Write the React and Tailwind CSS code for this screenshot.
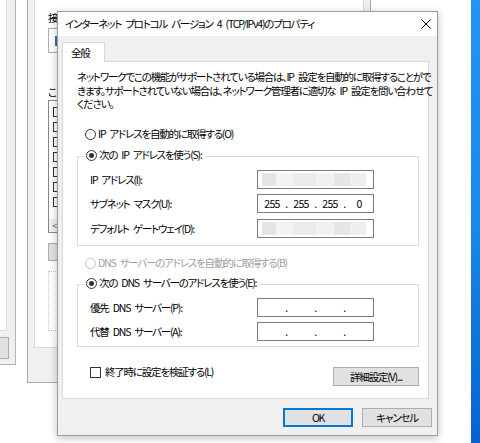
export default function App() {
  const Radio = ({ checked, disabled }) => (
    <span
      className={`flex h-[11px] w-[11px] shrink-0 items-center justify-center rounded-full border bg-white ${
        disabled ? "border-[#c4c4c4]" : "border-[#333333]"
      }`}
    >
      {checked && <span className="h-[5px] w-[5px] rounded-full bg-[#333333]" />}
    </span>
  );

  const Censor = () => (
    <div className="flex h-full items-center pl-[4px]">
      <div className="h-[13px] w-[14px] bg-[#e4e4e4]" />
      <div className="h-[13px] w-[18px] bg-[#f3f3f3]" />
      <div className="h-[13px] w-[22px] bg-[#ebebeb]" />
      <div className="h-[13px] w-[18px] bg-[#f1f1f1]" />
      <div className="h-[13px] w-[16px] bg-[#e6e6e6]" />
      <div className="h-[13px] w-[16px] bg-[#efefef]" />
    </div>
  );

  const IpField = ({ values }) => (
    <div className="flex h-[19px] w-[117px] items-center border border-[#7a7a7a] bg-white pl-[2px] tracking-[-0.6px]">
      {[0, 1, 2, 3].map((i) => (
        <div key={i} className="flex items-center">
          <span className="w-[24px] text-center">{values ? values[i] : ""}</span>
          {i < 3 && <span className="w-[5px] text-center">.</span>}
        </div>
      ))}
    </div>
  );

  const CensorField = () => (
    <div className="h-[19px] w-[117px] border border-[#7a7a7a] bg-white">
      <Censor />
    </div>
  );

  return (
    <div className="relative h-[443px] w-[480px] overflow-hidden whitespace-nowrap bg-white font-['Noto_Sans_CJK_JP',sans-serif] text-[10.5px] leading-[14px] tracking-[-1.2px] text-black [font-feature-settings:'palt'] [word-spacing:3px]">
      {/* desktop strip */}
      <div className="absolute right-0 top-0 h-full w-[9px] bg-gradient-to-b from-[#2494f2] via-[#1b87ec] to-[#0862cf]" />

      {/* far-left window */}
      <div className="absolute left-[-30px] top-[-20px] h-[385px] w-[46px] border border-[#b4b4b4] bg-[#f0f0f0]">
        <div className="ml-[8px] mt-[8px] h-[342px] w-[28px] border border-[#d9d9d9] bg-white" />
        <div className="ml-[20px] mt-[6px] h-[22px] w-[18px] border border-[#adadad] bg-[#e1e1e1]" />
      </div>

      {/* back window: Ethernet properties (mostly covered) */}
      <div className="absolute left-[27px] top-[-40px] h-[423px] w-[344px] border border-[#aaaaaa] bg-[#f0f0f0] px-[6px]">
        <div className="mt-[10px] h-[377px] w-full border border-[#d9d9d9] bg-white pl-[13px] pt-[39px]">
          <div>接</div>
          <div className="mt-[3px] flex h-[25px] w-[305px] items-center border border-[#adadad] bg-white pl-[6px]">
            <div className="h-[10px] w-[2px] bg-[#3b6fb6]" />
          </div>
          <div className="mt-[32px]">こ</div>
          <div className="mt-[1px] h-[133px] w-[305px] border border-[#828790] bg-white">
            <div className="flex flex-col gap-[1px] pl-[4px] pt-[4px]">
              {[0, 1, 2, 3, 4, 5, 6].map((i) => (
                <div key={i} className="flex h-[14px] items-center">
                  <span className="h-[10px] w-[10px] border border-[#333333]" />
                </div>
              ))}
            </div>
          </div>
          <div className="-mt-[14px] ml-[1px] flex h-[13px] w-[303px] items-center bg-[#f0f0f0] pl-[3px] text-[9px] leading-none text-[#606060]">
            &lt;
          </div>
          <div className="mt-[11px] h-[18px] w-[70px] border border-[#adadad] bg-[#e1e1e1]" />
          <div className="mt-[10px] h-[60px] w-[306px] border border-dotted border-[#c8c8c8]" />
        </div>
      </div>

      {/* main dialog */}
      <div className="absolute left-[57px] top-[11px] flex h-[425px] w-[381px] flex-col border border-[#9c9c9c] bg-[#f0f0f0] shadow-[0_2px_8px_rgba(0,0,0,0.25)]">
        {/* title bar */}
        <div className="flex h-[24px] items-center justify-between bg-white pl-[7px] pr-[6px]">
          <span>インターネット プロトコル バージョン 4 (TCP/IPv4)のプロパティ</span>
          <svg width="10" height="10" viewBox="0 0 10 10">
            <path d="M0.5 0.5 L9.5 9.5 M9.5 0.5 L0.5 9.5" stroke="#000" strokeWidth="1" />
          </svg>
        </div>

        {/* body */}
        <div className="flex flex-1 flex-col px-[4px] pt-[6px]">
          {/* tab */}
          <div className="relative z-10 flex h-[20px] w-[43px] items-center border border-b-0 border-[#d9d9d9] bg-white pl-[8px]">
            全般
          </div>
          {/* panel */}
          <div className="-mt-px flex h-[338px] w-[367px] flex-col border border-[#d9d9d9] bg-white">
            <div className="h-[49px] pl-[14px] pt-[8px] leading-[13.5px]">
              ネットワークでこの機能がサポートされている場合は、IP 設定を自動的に取得することがで
              <br />
              きます。サポートされていない場合は、ネットワーク管理者に適切な IP 設定を問い合わせて
              <br />
              ください。
            </div>

            <div className="ml-[22px] mt-[16px] flex h-[14px] items-center gap-[2px]">
              <Radio />
              <span>IP アドレスを自動的に取得する(O)</span>
            </div>

            <fieldset className="ml-[14px] mt-[7px] w-[342px] border border-[#dcdcdc] pb-[7px]">
              <legend className="ml-[6px] h-[16px] px-[2px]">
                <div className="flex h-[14px] items-center gap-[2px]">
                  <Radio checked />
                  <span className="pr-[2px]">次の IP アドレスを使う(S):</span>
                </div>
              </legend>
              <div className="mt-[6px] flex h-[19px] items-center pl-[12px]">
                <span className="w-[167px]">IP アドレス(I):</span>
                <CensorField />
              </div>
              <div className="mt-[5px] flex h-[19px] items-center pl-[12px]">
                <span className="w-[167px]">サブネット マスク(U):</span>
                <IpField values={["255", "255", "255", "0"]} />
              </div>
              <div className="mt-[6px] flex h-[19px] items-center pl-[12px]">
                <span className="w-[167px]">デフォルト ゲートウェイ(D):</span>
                <CensorField />
              </div>
            </fieldset>

            <div className="ml-[22px] mt-[10px] flex h-[14px] items-center gap-[2px] text-[#a0a0a0]">
              <Radio disabled />
              <span>DNS サーバーのアドレスを自動的に取得する(B)</span>
            </div>

            <fieldset className="ml-[14px] mt-[6px] w-[342px] border border-[#dcdcdc] pb-[5px]">
              <legend className="ml-[6px] h-[16px] px-[2px]">
                <div className="flex h-[14px] items-center gap-[2px]">
                  <Radio checked />
                  <span className="pr-[2px]">次の DNS サーバーのアドレスを使う(E):</span>
                </div>
              </legend>
              <div className="mt-[6px] flex h-[19px] items-center pl-[12px]">
                <span className="w-[167px]">優先 DNS サーバー(P):</span>
                <IpField />
              </div>
              <div className="mt-[5px] flex h-[19px] items-center pl-[12px]">
                <span className="w-[167px]">代替 DNS サーバー(A):</span>
                <IpField />
              </div>
            </fieldset>

            <div className="mt-[18px] flex items-start justify-between pl-[27px] pr-[9px]">
              <div className="flex h-[14px] items-center gap-[4px]">
                <span className="h-[11px] w-[11px] border border-[#333333] bg-white" />
                <span>終了時に設定を検証する(L)</span>
              </div>
              <div className="mt-[2px] flex h-[19px] w-[86px] items-center justify-center border border-[#adadad] bg-[#e1e1e1]">
                詳細設定(V)...
              </div>
            </div>
          </div>

          {/* buttons */}
          <div className="mt-[9px] flex justify-end gap-[9px] pr-[1px]">
            <div className="flex h-[19px] w-[70px] items-center justify-center border-2 border-[#0078d7] bg-[#e1e1e1]">
              OK
            </div>
            <div className="flex h-[19px] w-[70px] items-center justify-center border border-[#adadad] bg-[#e1e1e1]">
              キャンセル
            </div>
          </div>
        </div>
      </div>
    </div>
  );
}
